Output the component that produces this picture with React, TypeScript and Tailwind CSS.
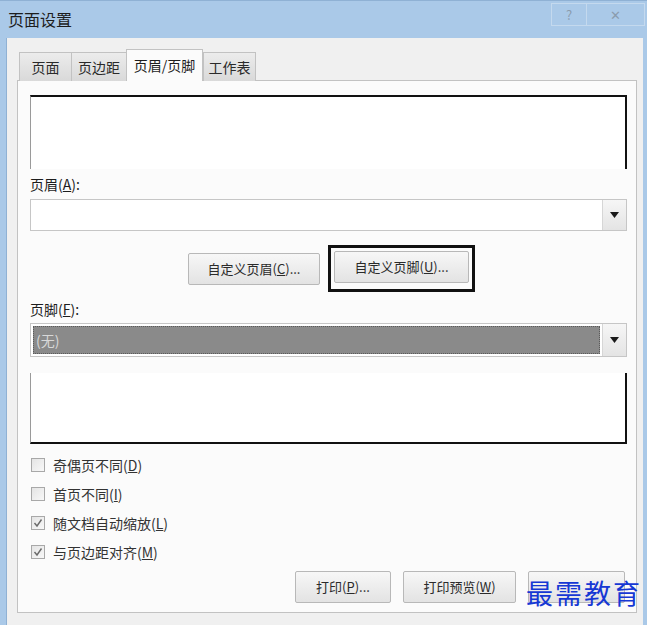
import React from "react";

const FONT = { fontFamily: '"Noto Sans CJK SC", "Liberation Sans", sans-serif' };

const TABS = [
  { id: "page", label: "页面", w: "w-[53px]" },
  { id: "margin", label: "页边距", w: "w-[56px]" },
  { id: "hf", label: "页眉/页脚", w: "w-[77px]" },
  { id: "sheet", label: "工作表", w: "w-[53px]" },
];

const CHECKS = [
  { label: "奇偶页不同", key: "D", checked: false },
  { label: "首页不同", key: "I", checked: false },
  { label: "随文档自动缩放", key: "L", checked: true },
  { label: "与页边距对齐", key: "M", checked: true },
];

const Arrow = () => (
  <div className="w-[24px] self-stretch flex items-center justify-center border-l border-[#d6d6d6] bg-gradient-to-b from-[#f6f6f6] to-[#e4e4e4]">
    <svg width="9" height="6" viewBox="0 0 9 6">
      <path d="M0 0 H9 L4.5 6 Z" fill="#1a1a1a" />
    </svg>
  </div>
);

const Btn: React.FC<{ children?: React.ReactNode; className?: string }> = ({
  children,
  className = "",
}) => (
  <button
    className={`h-[32px] flex items-center justify-center border border-[#b8b8b8] rounded-[2px] bg-gradient-to-b from-[#f7f7f7] to-[#e3e3e3] text-[13px] text-[#2a2a2a] ${className}`}
  >
    {children}
  </button>
);

const Key: React.FC<{ k: string }> = ({ k }) => (
  <>
    (<span className="underline">{k}</span>)
  </>
);

export default function App() {
  return (
    <div
      className="w-[647px] h-[625px] bg-[#aac9e8] flex flex-col overflow-hidden border-t border-[#8fb1d4]"
      style={FONT}
    >
      {/* title bar */}
      <div className="h-[37px] relative flex items-center pl-[8px] pb-[2px]">
        <span className="text-[16px] text-[#1d1d1d]">页面设置</span>
        <div className="absolute right-[2px] top-[2px] flex h-[23px]">
          <div className="w-[35px] border border-[#c4d9ee] border-r-0 flex items-center justify-center text-[13px] text-[#8a9cae]">
            ?
          </div>
          <div className="w-[59px] border border-[#c4d9ee] flex items-center justify-center text-[13px] text-[#8a9cae]">
            ✕
          </div>
        </div>
      </div>

      {/* body */}
      <div className="flex-1 ml-[6px] mr-[4px] bg-[#f0f0f0] pl-[10px] pr-[6px] pt-[12px] pb-[12px] flex flex-col border-l border-[#8fb1d4]">
        {/* tabs */}
        <div className="h-[31px] flex items-end pl-[2px] -mb-px relative z-10">
          {TABS.map((t) =>
            t.id === "hf" ? (
              <div
                key={t.id}
                className={`${t.w} h-[32px] bg-[#fbfbfb] border border-[#c2c2c2] border-b-0 flex items-center justify-center text-[14px] text-[#1d1d1d]`}
              >
                {t.label}
              </div>
            ) : (
              <div
                key={t.id}
                className={`${t.w} h-[29px] bg-gradient-to-b from-[#ececec] to-[#d9d9d9] border border-[#c2c2c2] border-b-0 -mr-px flex items-center justify-center text-[14px] text-[#2a2a2a]`}
              >
                {t.label}
              </div>
            )
          )}
        </div>

        {/* panel */}
        <div className="flex-1 bg-[#fbfbfb] border border-[#c2c2c2] pl-[12px] pr-[9px] pt-[14px] flex flex-col">
          {/* header preview */}
          <div className="h-[74px] border-t-2 border-r-2 border-t-[#111] border-r-[#111] border-l border-l-[#9a9a9a] bg-white" />

          <div className="mt-[7px] h-[16px] flex items-center text-[14px] text-[#1d1d1d]">
            页眉<Key k="A" />:
          </div>

          <div className="mt-[7px] h-[32px] flex border border-[#c6c6c6] bg-white">
            <div className="flex-1" />
            <Arrow />
          </div>

          <div className="mt-[14px] flex justify-center items-center gap-[8px] pl-[6px]">
            <Btn className="w-[132px]">
              自定义页眉<Key k="C" />...
            </Btn>
            <div className="border-[3px] border-[#111] p-[3px] pb-[6px]">
              <Btn className="w-[135px]">
                自定义页脚<Key k="U" />...
              </Btn>
            </div>
          </div>

          <div className="mt-[9px] h-[16px] flex items-center text-[14px] text-[#1d1d1d]">
            页脚<Key k="F" />:
          </div>

          <div className="mt-[6px] h-[34px] flex border border-[#c6c6c6] bg-white">
            <div className="flex-1 m-[2px] bg-[#8a8a8a] border border-dotted border-[#5a5a5a] flex items-center pl-[2px] text-[14px] text-[#d8d8d8]">
              (无)
            </div>
            <Arrow />
          </div>

          {/* footer preview */}
          <div className="mt-[16px] h-[71px] border-b-2 border-r-2 border-b-[#111] border-r-[#111] border-l border-l-[#9a9a9a] bg-white" />

          <div className="mt-[11px] flex flex-col gap-[9px]">
            {CHECKS.map((c) => (
              <div key={c.key} className="h-[20px] flex items-center gap-[8px] pl-[1px]">
                <div className="w-[14px] h-[14px] border border-[#a8a8a8] bg-gradient-to-br from-[#e4e4e4] to-[#f8f8f8] flex items-center justify-center">
                  {c.checked && (
                    <svg width="10" height="10" viewBox="0 0 10 10">
                      <path d="M1.5 5 L4 8 L8.5 1.5" stroke="#6a6a6a" strokeWidth="1.4" fill="none" />
                    </svg>
                  )}
                </div>
                <span className="text-[14px] text-[#333]">
                  {c.label}
                  <Key k={c.key} />
                </span>
              </div>
            ))}
          </div>

          <div className="mt-[9px] flex justify-end items-center gap-[12px] pr-[2px]">
            <Btn className="w-[96px]">
              打印<Key k="P" />...
            </Btn>
            <Btn className="w-[113px] border-[#707070]">
              打印预览<Key k="W" />
            </Btn>
            <div className="relative w-[97px] h-[32px]">
              <Btn className="w-[97px]" />
              <span className="absolute -left-[2px] top-[7px] whitespace-nowrap text-[27px] leading-[30px] text-[#1638d4] tracking-[2px]">
                最需教育
              </span>
            </div>
          </div>
        </div>
      </div>
    </div>
  );
}
